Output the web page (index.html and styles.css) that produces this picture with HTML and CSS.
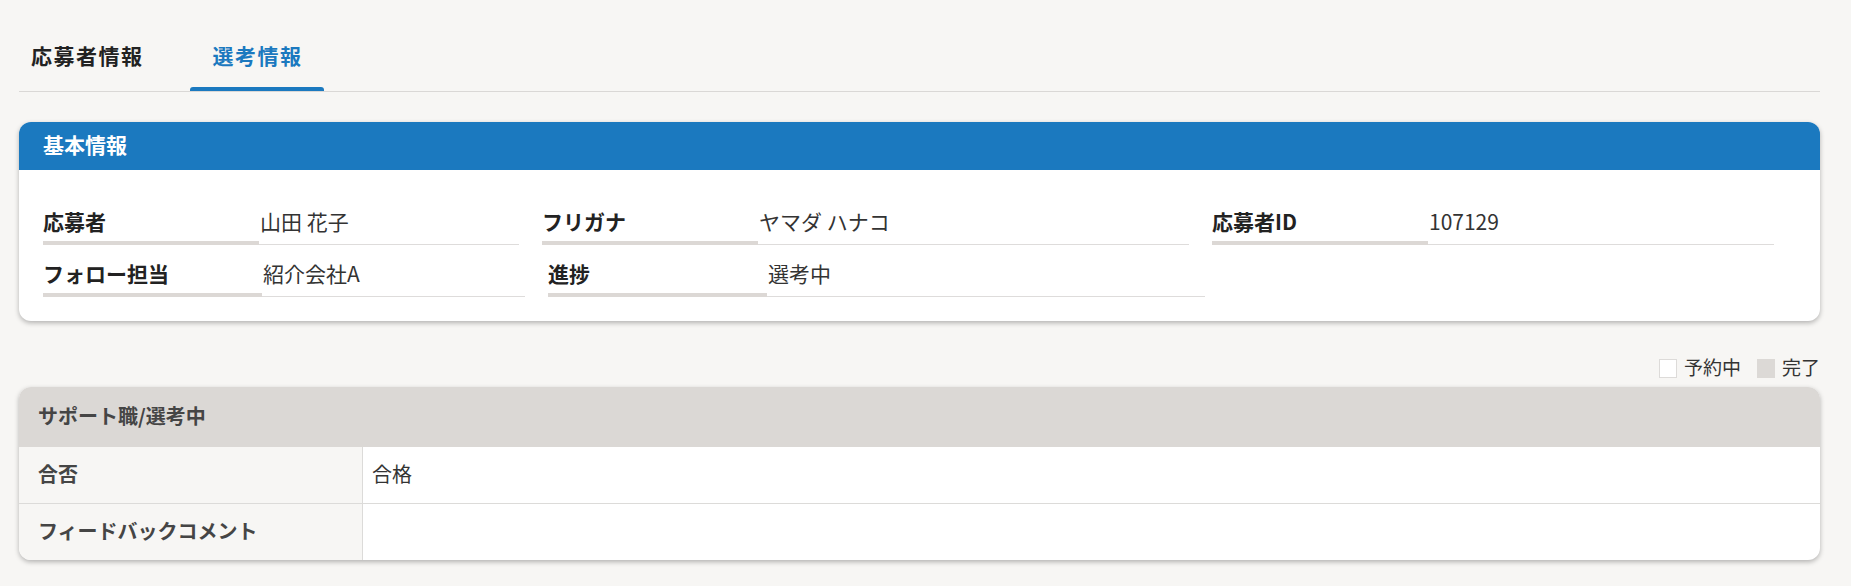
FILE: index.html
```html
<!DOCTYPE html>
<html lang="ja">
<head>
<meta charset="utf-8">
<title>選考情報</title>
<link rel="stylesheet" href="styles.css">
</head>
<body>
<div class="page">
  <nav class="tabs">
    <div class="tab tab-first">応募者情報</div>
    <div class="tab tab-active">
      <span class="tab-label">選考情報</span>
      <span class="tab-bar"></span>
    </div>
  </nav>

  <section class="card">
    <header class="card-head">基本情報</header>
    <div class="card-body">
      <div class="field-row">
        <div class="field w476">
          <div class="f-label lw216">応募者</div>
          <div class="f-value">山田 花子</div>
        </div>
        <div class="field w647">
          <div class="f-label lw216">フリガナ</div>
          <div class="f-value">ヤマダ ハナコ</div>
        </div>
        <div class="field w562">
          <div class="f-label lw216">応募者ID</div>
          <div class="f-value">107129</div>
        </div>
      </div>
      <div class="field-row">
        <div class="field w482">
          <div class="f-label lw219">フォロー担当</div>
          <div class="f-value">紹介会社A</div>
        </div>
        <div class="field w657">
          <div class="f-label lw219">進捗</div>
          <div class="f-value">選考中</div>
        </div>
      </div>
    </div>
  </section>

  <div class="legend">
    <span class="legend-box box-white"></span><span class="legend-text">予約中</span>
    <span class="legend-box box-gray"></span><span class="legend-text">完了</span>
  </div>

  <section class="card">
    <header class="card2-head">サポート職/選考中</header>
    <div class="t-row">
      <div class="t-label">合否</div>
      <div class="t-value">合格</div>
    </div>
    <div class="t-row">
      <div class="t-label">フィードバックコメント</div>
      <div class="t-value"></div>
    </div>
  </section>
</div>
</body>
</html>
```

FILE: styles.css
```css
html, body {
  margin: 0;
  padding: 0;
  background: #f7f6f4;
}
body {
  font-family: "Noto Sans CJK JP", "Noto Sans", sans-serif;
  color: #333;
}
.page {
  padding: 0 31px 12px 19px;
}

/* tabs */
.tabs {
  display: flex;
  align-items: flex-end;
  border-bottom: 1px solid #dad8d6;
  height: 91px;
}
.tab {
  font-size: 21px;
  font-weight: 700;
  letter-spacing: 1.5px;
  line-height: 30px;
}
.tab-first {
  color: #222;
  margin-left: 12px;
  padding-bottom: 21px;
}
.tab-active {
  display: flex;
  flex-direction: column;
  align-items: stretch;
  margin-left: 46px;
  color: #1b79bf;
}
.tab-label {
  padding: 0 21px 17px 23px;
}
.tab-bar {
  height: 4px;
  background: #1b79bf;
  border-radius: 3px 3px 0 0;
}

/* card */
.card {
  margin-top: 30px;
  background: #fff;
  border-radius: 12px;
  overflow: hidden;
  box-shadow: 0 2px 5px rgba(0, 0, 0, 0.28);
}
.card-head {
  height: 48px;
  background: #1b79bf;
  color: #fff;
  font-size: 21px;
  font-weight: 700;
  line-height: 45px;
  padding-left: 24px;
}
.card-body {
  padding: 31px 24px 24px 24px;
  display: flex;
  flex-direction: column;
  gap: 8px;
}
.field-row {
  display: flex;
  column-gap: 23px;
}
.field {
  display: flex;
  height: 44px;
  box-sizing: border-box;
  font-size: 21px;
  line-height: 30px;
}
.w476 { width: 476px; }
.w647 { width: 647px; }
.w562 { width: 562px; }
.w482 { width: 482px; }
.w657 { width: 657px; }
.f-label {
  flex: none;
  box-sizing: border-box;
  padding: 5px 0 5px 0;
  border-bottom: 4px solid #dcd8d5;
  font-weight: 700;
  color: #222;
}
.lw216 { width: 216px; }
.lw219 { width: 219px; }
.f-value {
  flex: 1;
  box-sizing: border-box;
  padding: 5px 0 8px 1px;
  border-bottom: 1px solid #dedcdb;
  color: #333;
}

/* legend */
.legend {
  display: flex;
  justify-content: flex-end;
  align-items: center;
  margin-top: 33px;
  height: 28px;
  font-size: 19px;
  line-height: 26px;
  color: #333;
}
.legend-text {
  padding-bottom: 2px;
}
.legend-box {
  width: 18px;
  height: 19px;
  box-sizing: border-box;
  margin-right: 7px;
}
.box-white {
  background: #fff;
  border: 1px solid #dddbd9;
}
.box-gray {
  background: #dcd9d6;
  margin-left: 16px;
}

/* card 2 */
.legend + .card {
  margin-top: 5px;
}
.card2-head {
  height: 60px;
  background: #dbd8d5;
  color: #454545;
  font-size: 20px;
  font-weight: 700;
  line-height: 58px;
  padding-left: 19px;
}
.t-row {
  display: flex;
  height: 56px;
  font-size: 20px;
  line-height: 54px;
}
.t-row + .t-row {
  border-top: 1px solid #dcdbd9;
}
.t-label {
  width: 344px;
  flex: none;
  box-sizing: border-box;
  padding-left: 19px;
  background: #f7f6f4;
  border-right: 1px solid #dcdbd9;
  font-weight: 700;
  color: #454545;
}
.t-value {
  flex: 1;
  padding-left: 9px;
  color: #333;
}
```
